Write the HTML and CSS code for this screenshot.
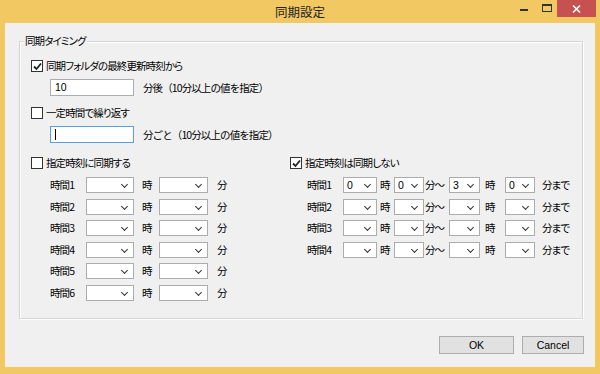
FILE: index.html
```html
<!DOCTYPE html>
<html lang="ja">
<head>
    <meta charset="UTF-8">
    <meta name="viewport" content="width=device-width, initial-scale=1.0">
    <title>同期設定</title>
    <link rel="stylesheet" href="styles.css">
</head>
<body>
<div class="window">
    <div class="titlebar">
        <span></span>
        <span class="title">同期設定</span>
        <div class="controls">
            <span class="ctl"><span class="ico-min"></span></span>
            <span class="ctl"><span class="ico-max"></span></span>
            <span class="ctl close">
                <svg width="9" height="8" viewBox="0 0 9 8"><path d="M1 0.5 L8 7.5 M8 0.5 L1 7.5" stroke="#fff" stroke-width="1.6"/></svg>
            </span>
        </div>
    </div>

    <div class="client">
        <div class="group">
            <span class="legend">同期タイミング</span>

            <div class="check-row">
                <span class="checkbox checked"><svg width="9" height="9" viewBox="0 0 9 9"><path d="M1 4.5 L3.5 7 L8 1.5" fill="none" stroke="#222" stroke-width="1.8"/></svg></span>
                <span>同期フォルダの最終更新時刻から</span>
            </div>
            <div class="field-row">
                <span class="textbox">10</span>
                <span class="note">分後（10分以上の値を指定）</span>
            </div>

            <div class="check-row gap">
                <span class="checkbox"></span>
                <span>一定時間で繰り返す</span>
            </div>
            <div class="field-row">
                <span class="textbox focus"><span class="caret"></span></span>
                <span class="note">分ごと（10分以上の値を指定）</span>
            </div>

            <div class="cols">
                <div class="col-left">
                    <div class="check-row">
                        <span class="checkbox"></span>
                        <span>指定時刻に同期する</span>
                    </div>
                    <div class="times left-times">
                        <span>時間1</span><span class="combo"></span><span class="t8">時</span><span class="combo"></span><span class="t9">分</span>
                        <span>時間2</span><span class="combo"></span><span class="t8">時</span><span class="combo"></span><span class="t9">分</span>
                        <span>時間3</span><span class="combo"></span><span class="t8">時</span><span class="combo"></span><span class="t9">分</span>
                        <span>時間4</span><span class="combo"></span><span class="t8">時</span><span class="combo"></span><span class="t9">分</span>
                        <span>時間5</span><span class="combo"></span><span class="t8">時</span><span class="combo"></span><span class="t9">分</span>
                        <span>時間6</span><span class="combo"></span><span class="t8">時</span><span class="combo"></span><span class="t9">分</span>
                    </div>
                </div>

                <div class="col-right">
                    <div class="check-row">
                        <span class="checkbox checked"><svg width="9" height="9" viewBox="0 0 9 9"><path d="M1 4.5 L3.5 7 L8 1.5" fill="none" stroke="#222" stroke-width="1.8"/></svg></span>
                        <span>指定時刻は同期しない</span>
                    </div>
                    <div class="times right-times">
                        <span>時間1</span><span class="combo">0</span><span class="t3">時</span><span class="combo">0</span><span class="t1">分～</span><span class="combo">3</span><span class="t5">時</span><span class="combo">0</span><span class="t7">分まで</span>
                        <span>時間2</span><span class="combo"></span><span class="t3">時</span><span class="combo"></span><span class="t1">分～</span><span class="combo"></span><span class="t5">時</span><span class="combo"></span><span class="t7">分まで</span>
                        <span>時間3</span><span class="combo"></span><span class="t3">時</span><span class="combo"></span><span class="t1">分～</span><span class="combo"></span><span class="t5">時</span><span class="combo"></span><span class="t7">分まで</span>
                        <span>時間4</span><span class="combo"></span><span class="t3">時</span><span class="combo"></span><span class="t1">分～</span><span class="combo"></span><span class="t5">時</span><span class="combo"></span><span class="t7">分まで</span>
                    </div>
                </div>
            </div>
        </div>

        <div class="buttons">
            <span class="button ok">OK</span>
            <span class="button cancel">Cancel</span>
        </div>
    </div>
</div>
</body>
</html>
```

FILE: styles.css
```css
* {
  box-sizing: border-box;
}

body {
  margin: 0;
  font-family: "Noto Sans CJK JP", sans-serif;
  font-size: 10.5px;
  letter-spacing: -0.9px;
  font-feature-settings: "palt";
  color: #000;
}

.window {
  width: 600px;
  height: 374px;
  background: #f1c862;
  padding: 0 5px 7px;
  display: flex;
  flex-direction: column;
}

/* title bar */
.titlebar {
  height: 23px;
  display: grid;
  grid-template-columns: 1fr auto 1fr;
}
.title {
  font-size: 12.5px;
  letter-spacing: 0;
  line-height: 24px;
  color: #222;
}
.controls {
  justify-self: end;
  display: flex;
  margin-right: -1px;
}
.ctl {
  width: 22px;
  height: 17px;
  position: relative;
}
.ico-min {
  position: absolute;
  left: 13px;
  top: 9px;
  width: 8px;
  height: 2px;
  background: #333;
}
.ico-max {
  position: absolute;
  left: 13px;
  top: 4px;
  width: 10px;
  height: 8px;
  border: 1px solid #333;
  border-top-width: 2px;
}
.close {
  width: 39px;
  margin-left: 6px;
  background: #c75050;
  display: flex;
  align-items: center;
  justify-content: center;
}

/* client area */
.client {
  flex: 1;
  background: #f0f0f0;
  padding: 18px 12px 0 14px;
  display: flex;
  flex-direction: column;
}

.group {
  position: relative;
  height: 278px;
  border: 1px solid #d5d5d5;
  box-shadow: inset 1px 1px 0 #fff, 1px 1px 0 #fff;
  padding: 17px 0 0 11px;
}
.legend {
  position: absolute;
  top: -8px;
  left: 4px;
  padding: 0 1px;
  line-height: 14px;
  background: #f0f0f0;
}

.check-row {
  display: flex;
  align-items: center;
  gap: 3px;
  height: 14px;
  line-height: 14px;
}
.check-row.gap {
  margin-top: 10px;
}
.checkbox {
  width: 12px;
  height: 12px;
  border: 1px solid #333;
  background: #fff;
  display: flex;
  align-items: center;
  justify-content: center;
}

.field-row {
  display: flex;
  align-items: center;
  gap: 9px;
  margin: 6px 0 0 19px;
}
.note {
  font-feature-settings: normal;
}
.textbox {
  width: 84px;
  height: 17px;
  border: 1px solid #abadb3;
  background: #fff;
  padding-left: 4px;
  font-family: "Liberation Sans", sans-serif;
  font-size: 10.5px;
  letter-spacing: 0;
  line-height: 15px;
  display: flex;
  align-items: center;
}
.textbox.focus {
  border-color: #569de5;
}
.caret {
  width: 1px;
  height: 11px;
  background: #000;
}

.cols {
  display: flex;
  margin-top: 13px;
}
.col-left {
  width: 259px;
}

.times {
  display: grid;
  grid-auto-rows: 16px;
  row-gap: 5.6px;
  margin-top: 7px;
  line-height: 16px;
}
.left-times {
  margin-left: 19px;
  grid-template-columns: 36px 48px 25px 49px auto;
}
.right-times {
  margin-left: 17px;
  grid-template-columns: 36px 34px 17px 30px 25px 31px 25px 30px auto;
}
.t1 { padding-left: 1px; }
.t3 { padding-left: 3px; }
.t5 { padding-left: 5px; }
.t7 { padding-left: 7px; }
.t8 { padding-left: 8px; }
.t9 { padding-left: 9px; }

.combo {
  position: relative;
  border: 1px solid #acacac;
  background: #fff;
  padding-left: 3px;
  font-family: "Liberation Sans", sans-serif;
  font-size: 10.5px;
  letter-spacing: 0;
  line-height: 14px;
}
.combo:after {
  content: "";
  position: absolute;
  right: 6px;
  top: 4px;
  width: 4px;
  height: 4px;
  border-right: 1.5px solid #333;
  border-bottom: 1.5px solid #333;
  transform: rotate(45deg);
}

/* buttons */
.buttons {
  display: flex;
  justify-content: flex-end;
  gap: 8px;
  margin: 17px -1px 0 0;
}
.button {
  height: 18px;
  border: 1px solid #adadad;
  background: #e1e1e1;
  font-family: "Liberation Sans", sans-serif;
  font-size: 10.5px;
  letter-spacing: 0;
  line-height: 16px;
  text-align: center;
}
.ok {
  width: 75px;
}
.cancel {
  width: 62px;
}
```
